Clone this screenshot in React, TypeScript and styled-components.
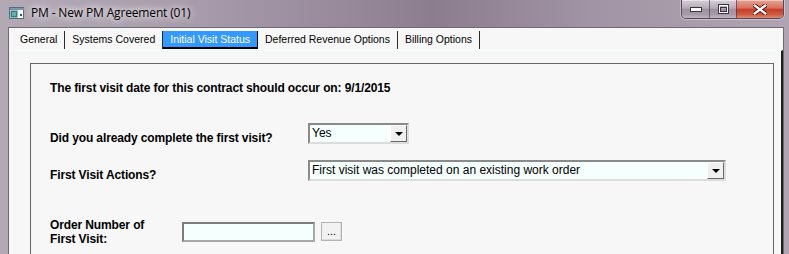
import React from 'react';
import styled, { createGlobalStyle } from 'styled-components';

// ================ GLOBAL ================
const GlobalStyle = createGlobalStyle`
  html, body {
    margin: 0;
    padding: 0;
    background: #a99dab;
  }
`;

// ================ WINDOW FRAME ================
const Window = styled.div`
  width: 789px;
  height: 254px;
  overflow: hidden;
  display: flex;
  flex-direction: column;
  background: linear-gradient(90deg, #b3a9b5 0%, #a89bab 25%, #968898 45%, #8c7d8e 55%, #a194a4 75%, #b0a4b2 100%);
  font-family: 'Liberation Sans', Arial, sans-serif;
`;

const TitleBar = styled.div`
  height: 27px;
  flex-shrink: 0;
  display: flex;
  align-items: flex-start;
`;

const AppIcon = styled.svg`
  width: 15px;
  height: 12px;
  margin: 7px 0 0 9px;
  flex-shrink: 0;
`;

const Title = styled.span`
  margin: 5px 0 0 7px;
  font-family: 'Open Sans', 'Noto Sans', sans-serif;
  font-size: 12px;
  line-height: 16px;
  color: #000;
  letter-spacing: -0.15px;
  text-shadow: 0 0 6px rgba(255, 255, 255, 0.9), 0 0 10px rgba(255, 255, 255, 0.7), 0 0 14px rgba(235, 230, 240, 0.6);
`;

const Controls = styled.div`
  margin-left: auto;
  margin-right: 5px;
  height: 18px;
  display: flex;
  border: 1px solid rgba(55, 45, 60, 0.75);
  border-top: none;
  border-radius: 0 0 5px 5px;
  overflow: hidden;
  box-shadow: 0 0 0 1px rgba(255, 255, 255, 0.35);
`;

const CtrlButton = styled.div<{ $kind: 'min' | 'max' | 'close' }>`
  width: ${p => (p.$kind === 'close' ? 46 : p.$kind === 'min' ? 27 : 26)}px;
  height: 100%;
  display: flex;
  align-items: center;
  justify-content: center;
  border-left: ${p => (p.$kind === 'min' ? 'none' : '1px solid rgba(60, 50, 65, 0.6)')};
  background: ${p =>
    p.$kind === 'close'
      ? 'linear-gradient(180deg, #e7a393 0%, #d9705c 45%, #c63e26 52%, #cf5a42 80%, #e08a74 100%)'
      : 'linear-gradient(180deg, #d6cfd8 0%, #b6abb9 45%, #9e91a1 52%, #a69aa9 80%, #c0b6c2 100%)'};
  box-shadow: inset 0 1px 0 rgba(255, 255, 255, 0.45);
`;

// ================ CLIENT AREA ================
const Client = styled.div`
  flex: 1;
  margin: 0 5px 0 8px;
  border: 1px solid #6c6c6c;
  border-bottom: none;
  background: #f7f7f7;
  display: flex;
  flex-direction: column;
  min-height: 0;
`;

const TabStrip = styled.div`
  height: 22px;
  flex-shrink: 0;
  display: flex;
  align-items: flex-start;
  padding: 3px 0 0 4px;
  box-sizing: border-box;
`;

const Tab = styled.div<{ $active?: boolean }>`
  height: 18px;
  box-sizing: border-box;
  padding: 0 7px;
  font-size: 10.5px;
  line-height: 17px;
  white-space: nowrap;
  color: ${p => (p.$active ? '#ffffff' : '#000000')};
  background: ${p => (p.$active ? '#3399ff' : 'transparent')};
  border-right: 1px solid ${p => (p.$active ? '#000' : '#2a2a2a')};
  border-bottom: ${p => (p.$active ? '2px solid #000' : 'none')};
`;

const TabPage = styled.div`
  flex: 1;
  display: flex;
  flex-direction: column;
  border-top: 1px solid #f0fffb;
  border-right: 2px solid #1e1e1e;
  min-height: 0;
`;

const GroupBox = styled.div`
  flex: 1;
  margin: 12px 7px 0 21px;
  border: 1px solid #666666;
  border-bottom: none;
  padding: 17px 0 0 19px;
  display: flex;
  flex-direction: column;
`;

const Heading = styled.div`
  font-size: 12px;
  font-weight: bold;
  line-height: 14px;
  letter-spacing: -0.12px;
  color: #000;
`;

const FormRow = styled.div<{ $gap: number }>`
  display: flex;
  align-items: flex-start;
  margin-top: ${p => p.$gap}px;
`;

const Label = styled.div<{ $width: number; $offset: number }>`
  width: ${p => p.$width}px;
  flex-shrink: 0;
  margin-top: ${p => p.$offset}px;
  font-size: 12px;
  font-weight: bold;
  line-height: 14px;
  letter-spacing: -0.12px;
  color: #000;
`;

const Select = styled.div<{ $width: number }>`
  width: ${p => p.$width}px;
  height: 21px;
  box-sizing: border-box;
  display: flex;
  align-items: flex-start;
  background: #f5fffe;
  border: 2px solid;
  border-color: #8a8a8a #dcdcdc #dcdcdc #8a8a8a;
  font-size: 12px;
  line-height: 16px;
  color: #000;
`;

const SelectText = styled.span`
  flex: 1;
  padding-left: 2px;
  white-space: nowrap;
  overflow: hidden;
`;

const DropButton = styled.div`
  width: 17px;
  height: 17px;
  box-sizing: border-box;
  background: #f0f0f0;
  border: 1px solid;
  border-color: #ffffff #6a6a6a #6a6a6a #ffffff;
  display: flex;
  align-items: center;
  justify-content: center;
`;

const Arrow = styled.span`
  width: 0;
  height: 0;
  margin-top: 1px;
  border-left: 4px solid transparent;
  border-right: 4px solid transparent;
  border-top: 4px solid #000;
`;

const TextBox = styled.div`
  width: 133px;
  height: 20px;
  margin-top: 4px;
  box-sizing: border-box;
  background: #f5fffe;
  border: 2px solid;
  border-color: #7c7c7c #a8a8a8 #a8a8a8 #7c7c7c;
`;

const BrowseButton = styled.div`
  width: 21px;
  height: 19px;
  margin: 4px 0 0 6px;
  box-sizing: border-box;
  background: #f2f2f2;
  border: 1px solid #b4b4b4;
  box-shadow: inset -1px -1px 0 #dcdcdc;
  font-size: 11px;
  line-height: 16px;
  text-align: center;
  color: #000;
`;

const tabs = ['General', 'Systems Covered', 'Initial Visit Status', 'Deferred Revenue Options', 'Billing Options'];

const Dropdown: React.FC<{ width: number; value: string }> = ({ width, value }) => (
  <Select $width={width}>
    <SelectText>{value}</SelectText>
    <DropButton>
      <Arrow />
    </DropButton>
  </Select>
);

const App: React.FC = () => (
  <>
    <GlobalStyle />
    <Window>
      <TitleBar>
        <AppIcon viewBox="0 0 15 12">
          <rect x="0.5" y="0.5" width="14" height="11" fill="#f4f6f8" stroke="#5b6a78" />
          <rect x="1" y="1" width="14" height="2" fill="#7d93aa" />
          <rect x="1.5" y="3.5" width="7" height="7" fill="#2f7f86" />
          <rect x="3" y="5" width="4" height="4" fill="#63b0a8" />
          <rect x="11" y="7" width="2" height="2" fill="#3c4a58" />
        </AppIcon>
        <Title>PM - New PM Agreement (01)</Title>
        <Controls>
          <CtrlButton $kind="min">
            <svg width="12" height="5" viewBox="0 0 12 5">
              <rect x="0.5" y="0.5" width="11" height="4" fill="#fff" stroke="#3a3340" />
            </svg>
          </CtrlButton>
          <CtrlButton $kind="max">
            <svg width="11" height="10" viewBox="0 0 11 10">
              <rect x="0.5" y="0.5" width="10" height="9" fill="none" stroke="#3a3340" />
              <rect x="1.5" y="1.5" width="8" height="7" fill="none" stroke="#fff" />
              <rect x="2.5" y="3.5" width="6" height="4" fill="none" stroke="#3a3340" />
            </svg>
          </CtrlButton>
          <CtrlButton $kind="close">
            <svg width="14" height="11" viewBox="0 0 14 11">
              <path d="M1 1 L13 10 M13 1 L1 10" stroke="#5a1a10" strokeWidth="4.2" strokeLinecap="square" />
              <path d="M1.8 1.6 L12.2 9.4 M12.2 1.6 L1.8 9.4" stroke="#fff" strokeWidth="2.4" strokeLinecap="square" />
            </svg>
          </CtrlButton>
        </Controls>
      </TitleBar>

      <Client>
        <TabStrip>
          {tabs.map(t => (
            <Tab key={t} $active={t === 'Initial Visit Status'}>
              {t}
            </Tab>
          ))}
        </TabStrip>
        <TabPage>
          <GroupBox>
            <Heading>The first visit date for this contract should occur on: 9/1/2015</Heading>

            <FormRow $gap={28}>
              <Label $width={258} $offset={8}>Did you already complete the first visit?</Label>
              <Dropdown width={101} value="Yes" />
            </FormRow>

            <FormRow $gap={15}>
              <Label $width={258} $offset={8}>First Visit Actions?</Label>
              <Dropdown width={418} value="First visit was completed on an existing work order" />
            </FormRow>

            <FormRow $gap={36}>
              <Label $width={132} $offset={0}>
                Order Number of
                <br />
                First Visit:
              </Label>
              <TextBox />
              <BrowseButton>...</BrowseButton>
            </FormRow>
          </GroupBox>
        </TabPage>
      </Client>
    </Window>
  </>
);

export default App;
